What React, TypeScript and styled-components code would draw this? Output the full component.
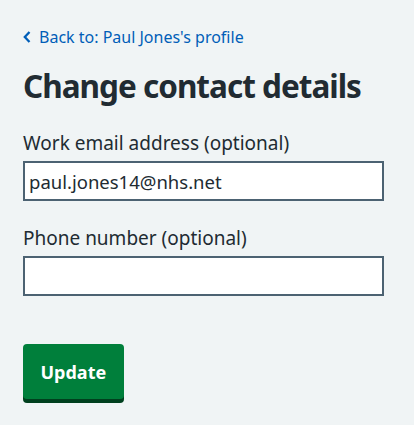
import React, { useState } from "react";
import styled, { createGlobalStyle } from "styled-components";

const GlobalStyle = createGlobalStyle`
  html, body {
    margin: 0;
    padding: 0;
    background: #f0f4f5;
    font-family: "Noto Sans", Arial, sans-serif;
    color: #212b32;
  }
`;

const Page = styled.main`
  display: flex;
  flex-direction: column;
  align-items: flex-start;
  padding: 25px 0 0 23px;
  min-height: 400px;
`;

const BackLink = styled.a`
  display: flex;
  align-items: center;
  gap: 8px;
  font-size: 16px;
  line-height: 24px;
  color: #005eb8;
  text-decoration: none;
  cursor: pointer;
`;

const Heading = styled.h1`
  margin: 17px 0 0;
  font-size: 31.5px;
  line-height: 40px;
  font-weight: 700;
  letter-spacing: -1px;
  white-space: nowrap;
`;

const FormGroup = styled.div<{ $top: number }>`
  display: flex;
  flex-direction: column;
  margin-top: ${(p) => p.$top}px;
`;

const Label = styled.label`
  font-size: 19px;
  line-height: 24px;
  margin-bottom: 6px;
`;

const Input = styled.input`
  box-sizing: border-box;
  width: 361px;
  height: 40px;
  border: 2px solid #4c6272;
  border-radius: 0;
  background: #fff;
  padding: 4px;
  font-family: inherit;
  font-size: 18.5px;
  color: #212b32;
  outline: none;
`;

const Button = styled.button`
  margin-top: 48px;
  padding: 0 17.5px;
  height: 55px;
  border: none;
  border-radius: 4px;
  background: #007f3b;
  box-shadow: 0 4px 0 #00401e;
  color: #fff;
  font-family: inherit;
  font-size: 18px;
  font-weight: 700;
  cursor: pointer;
`;

const Chevron = () => (
  <svg width="8" height="12" viewBox="0 0 8 12" aria-hidden="true">
    <path d="M6.5 1 L1.8 6 L6.5 11" fill="none" stroke="#005eb8" strokeWidth="2.3" />
  </svg>
);

export default function App() {
  const [email, setEmail] = useState("paul.jones14@nhs.net");
  const [phone, setPhone] = useState("");
  return (
    <>
      <GlobalStyle />
      <Page>
        <BackLink>
          <Chevron />
          Back to: Paul Jones's profile
        </BackLink>
        <Heading>Change contact details</Heading>
        <FormGroup $top={25}>
          <Label htmlFor="email">Work email address (optional)</Label>
          <Input id="email" value={email} onChange={(e) => setEmail(e.target.value)} />
        </FormGroup>
        <FormGroup $top={25}>
          <Label htmlFor="phone">Phone number (optional)</Label>
          <Input id="phone" value={phone} onChange={(e) => setPhone(e.target.value)} />
        </FormGroup>
        <Button>Update</Button>
      </Page>
    </>
  );
}
